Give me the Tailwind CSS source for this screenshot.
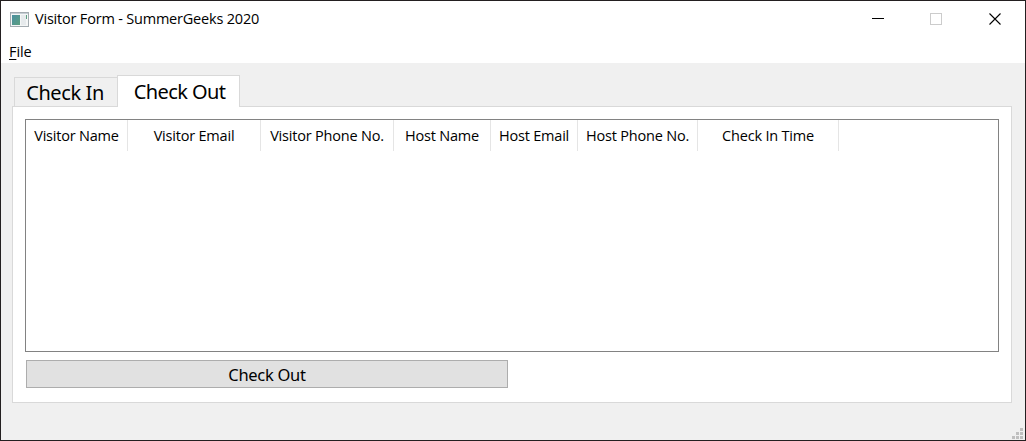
<!DOCTYPE html>
<html lang="en">
<head>
<meta charset="utf-8">
<title>Visitor Form - SummerGeeks 2020</title>
<script src="https://cdn.jsdelivr.net/npm/@tailwindcss/browser@4"></script>
</head>
<body class="overflow-hidden">
<div class="relative flex h-[441px] w-[1026px] flex-col border border-[#231f20] bg-[#f0f0f0] font-['Open_Sans',sans-serif] text-[14.5px] text-black">
  <header class="flex h-[36px] shrink-0 items-center bg-white pl-[9px]">
    <svg class="h-[15px] w-[19px] shrink-0" viewBox="0 0 19 15" shape-rendering="crispEdges">
      <defs><linearGradient id="g" x1="0" y1="0" x2="1" y2="1"><stop offset="0" stop-color="#4a8fa0"/><stop offset="1" stop-color="#5c9f80"/></linearGradient></defs>
      <rect x=".5" y=".5" width="18" height="14" fill="#f4f6f6" stroke="#a3abb0"/>
      <rect x="1" y="1" width="17" height="1" fill="#c5ced4"/>
      <rect x="2" y="3" width="8" height="10" fill="url(#g)"/>
      <rect x="11" y="3" width="5" height="10" fill="#e6eaec"/>
      <rect x="16" y="3" width="1" height="4" fill="#5c9f80"/>
    </svg>
    <span class="ml-[6px] whitespace-nowrap tracking-[-0.2px]">Visitor Form - SummerGeeks 2020</span>
    <svg class="ml-auto h-[36px] w-[174px] shrink-0" viewBox="0 0 174 36" fill="none">
      <path d="M21 17.5h12" stroke="#000"/>
      <rect x="79.500" y="12.500" width="11" height="11" stroke="#ccc"/>
      <path d="M138.500 12.500l11 11M149.500 12.500l-11 11" stroke="#000" stroke-width="1.100"/>
    </svg>
  </header>
  <nav class="flex h-[26px] shrink-0 items-center bg-white pt-[3px] pl-[8px] leading-[26px]"><span class="tracking-[-0.1px]"><span class="underline underline-offset-2">F</span>ile</span></nav>
  <div class="flex h-[43px] shrink-0 items-end pl-[13px] font-['Noto_Sans',sans-serif] text-[20px]">
    <div class="flex h-[29px] w-[103px] items-center justify-center border border-r-0 border-b-0 border-[#d9d9d9] pt-[2px] pr-[2px] whitespace-nowrap"><span class="tracking-[-0.4px]">Check In</span></div>
    <div class="z-10 -mb-px flex h-[32px] w-[123px] items-center justify-center border border-b-0 border-[#d9d9d9] bg-white pt-px pl-[2px] whitespace-nowrap"><span class="tracking-[-0.6px]">Check Out</span></div>
  </div>
  <main class="ml-[11px] flex h-[297px] w-[1000px] shrink-0 flex-col border border-[#d9d9d9] bg-white pt-[12px] pl-[12px]">
    <div class="h-[233px] w-[974px] border border-[#828282] bg-white">
      <div class="flex h-[31px] text-center leading-[31px] tracking-[-0.2px] whitespace-nowrap *:border-r *:border-[#e5e5e5]">
        <div class="w-[102px]">Visitor Name</div>
        <div class="w-[133px]">Visitor Email</div>
        <div class="w-[133px]">Visitor Phone No.</div>
        <div class="w-[97px]">Host Name</div>
        <div class="w-[87px]">Host Email</div>
        <div class="w-[120px]">Host Phone No.</div>
        <div class="w-[141px]">Check In Time</div>
      </div>
    </div>
    <button class="mt-[8px] ml-px flex h-[28px] w-[482px] items-center justify-center border border-[#adadad] bg-[#e1e1e1] pt-[2px] font-['Noto_Sans',sans-serif] text-[16.500px]"><span class="tracking-[-0.3px]">Check Out</span></button>
  </main>
  <svg class="absolute right-[2px] bottom-[1px] h-[11px] w-[11px]" viewBox="0 0 11 11" fill="#bfbfbf" shape-rendering="crispEdges">
    <path d="M8 0h3v3H8zM4 4h3v3H4zM8 4h3v3H8zM0 8h3v3H0zM4 8h3v3H4zM8 8h3v3H8z"/>
  </svg>
</div>
</body>
</html>
